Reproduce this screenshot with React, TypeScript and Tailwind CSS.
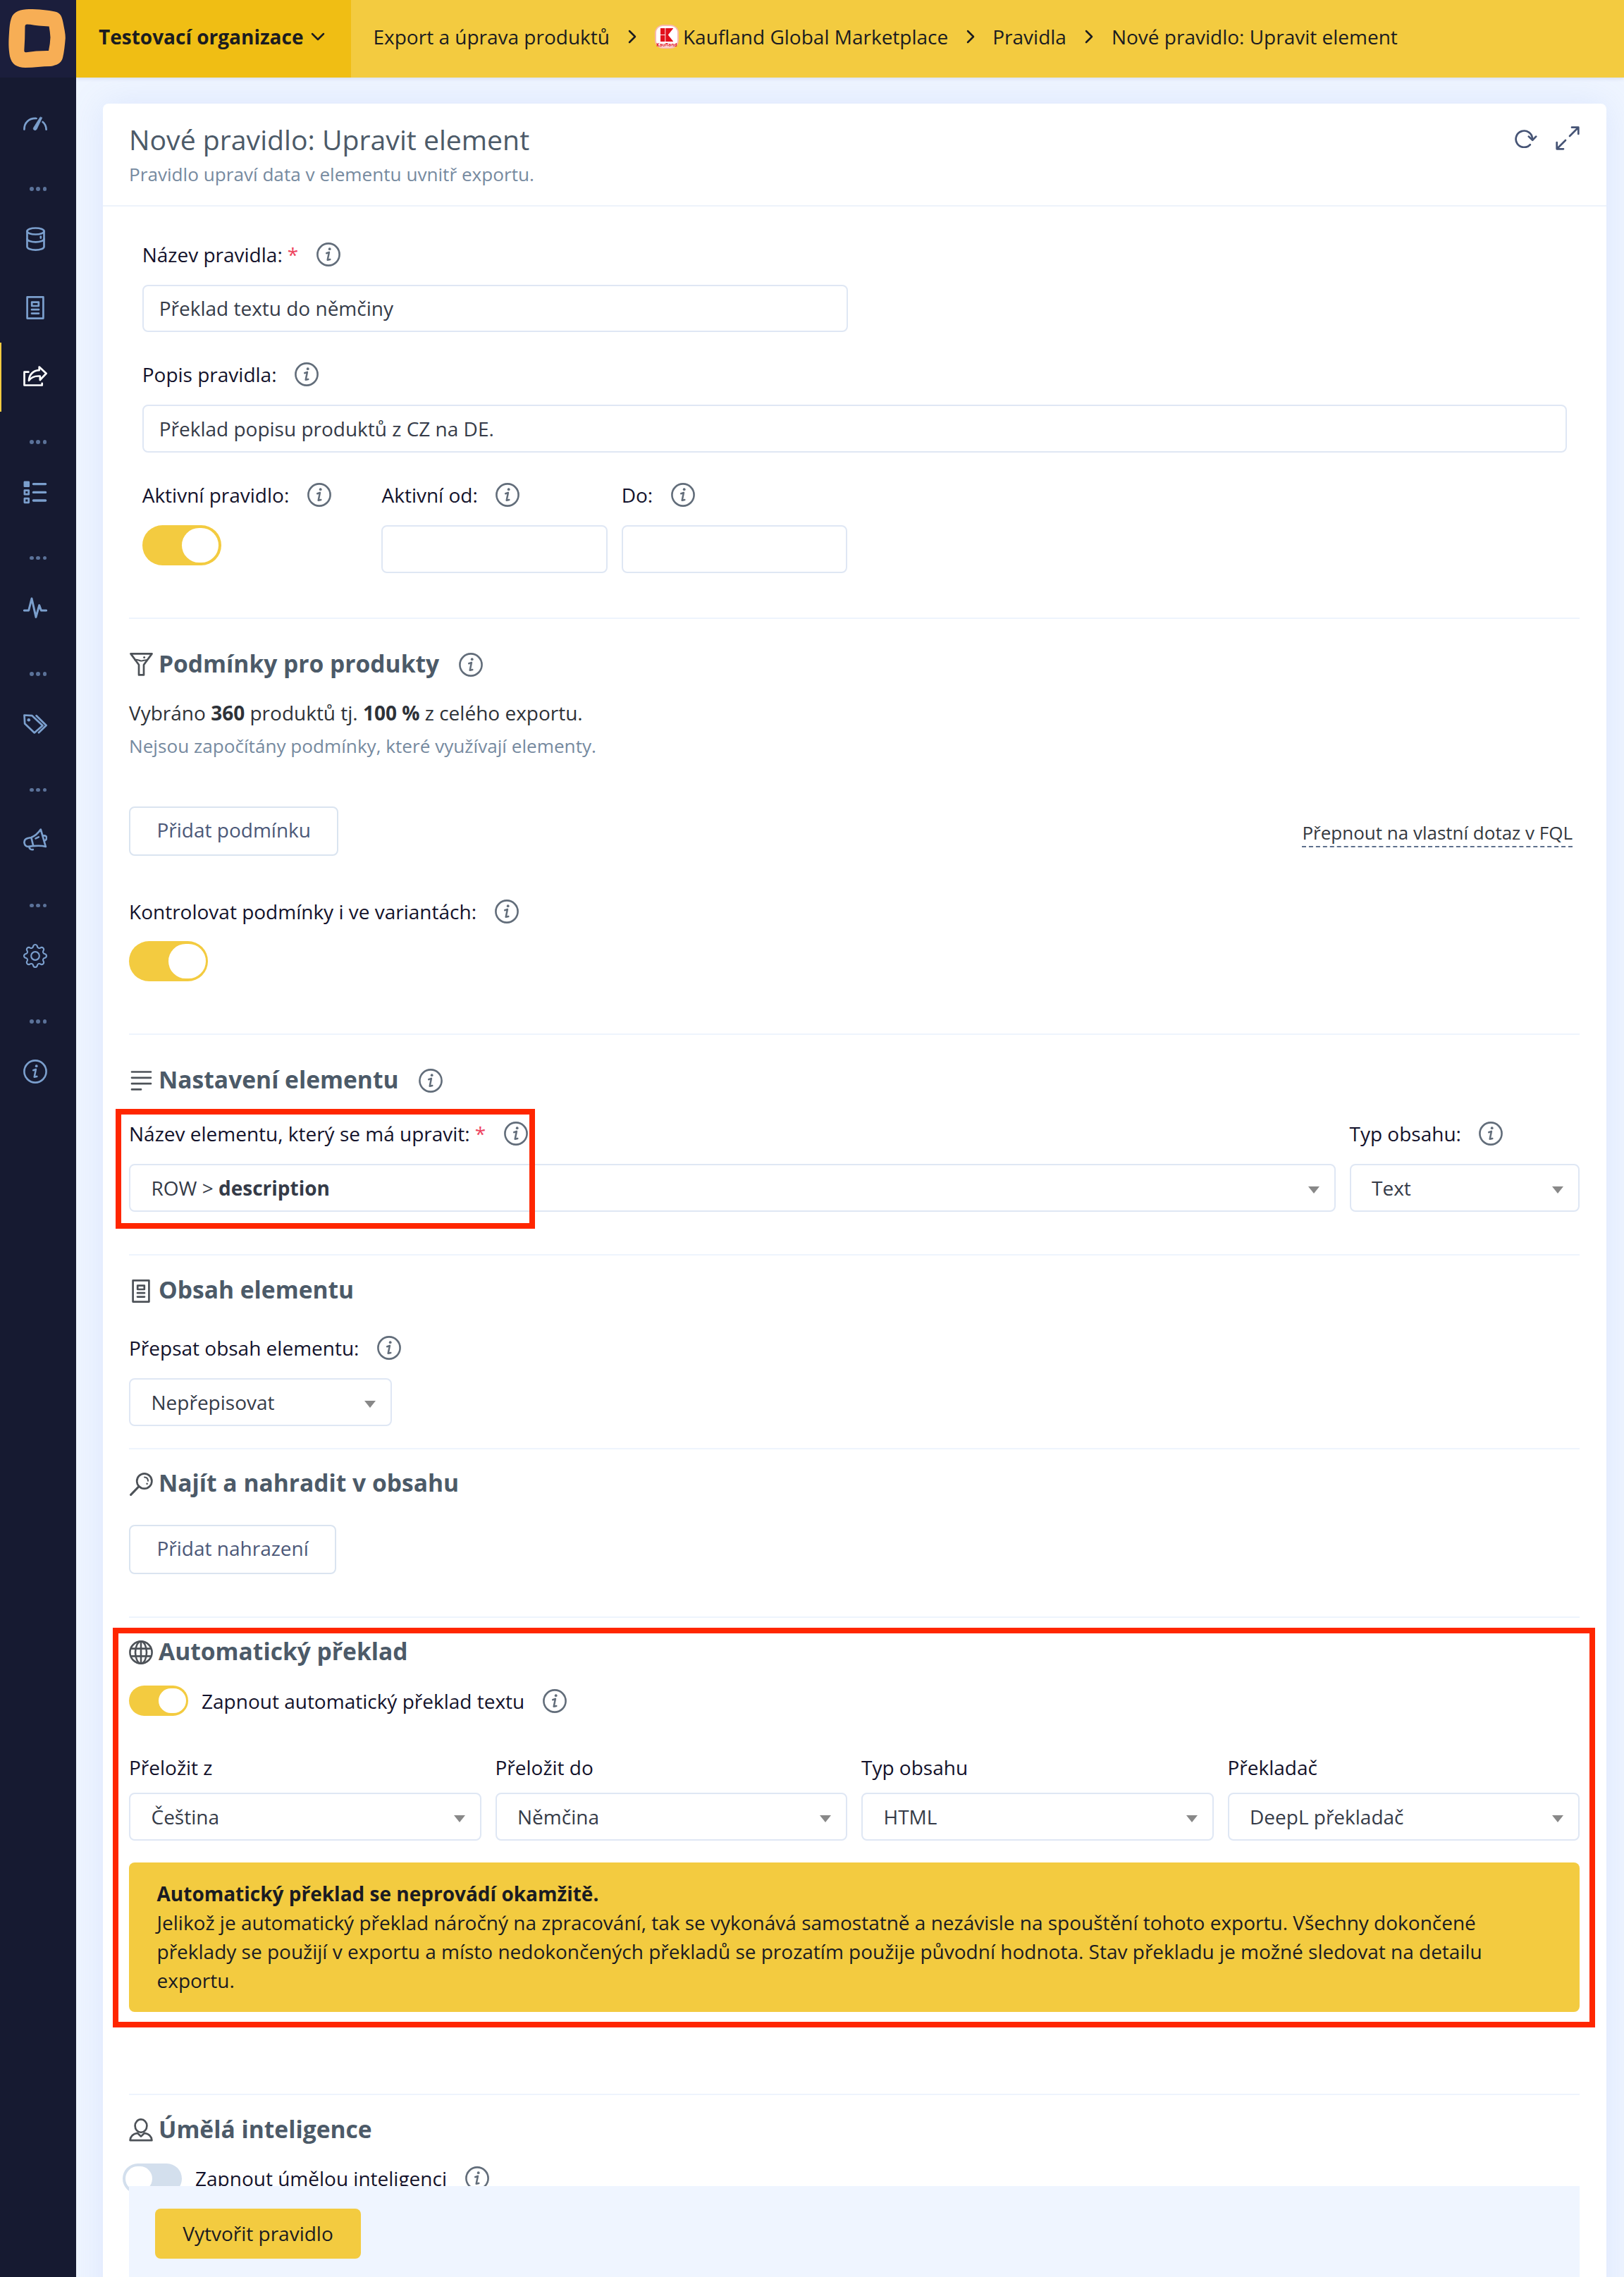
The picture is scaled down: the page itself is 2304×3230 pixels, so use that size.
import type { ReactNode } from "react";
import clsx from "clsx";
import { BsGear } from "react-icons/bs";

const iconStroke = {
  fill: "none",
  stroke: "currentColor",
  strokeWidth: 2.7,
  strokeLinecap: "round",
  strokeLinejoin: "round",
} as const;

function InfoIcon({ className }: { className?: string }) {
  return (
    <svg
      viewBox="0 0 34 34"
      className={clsx("size-[34px] shrink-0", className)}
      {...iconStroke}
    >
      <circle cx="17" cy="17" r="15.6" strokeWidth="2.6" />
      <circle cx="18.7" cy="9.2" r="1.9" fill="currentColor" stroke="none" />
      <path d="M14.2 15.2l3.7-1.3-2.2 10.8 3.6-.7" strokeWidth="2.5" />
    </svg>
  );
}

function GaugeIcon() {
  return (
    <svg viewBox="0 0 34 20" className="h-5 w-[34px]" {...iconStroke}>
      <path d="M1.4 18.6C1.4 9 8 2.4 18.6 3" />
      <path d="M27.6 8c3.3 2.6 4.8 6 5 10.6" />
      <path
        d="M24 1.2L14.6 16.2c-1.6 3 2.8 5 4.5 2L26.6 2.2z"
        fill="currentColor"
        strokeWidth="0.8"
      />
    </svg>
  );
}

function DatabaseIcon() {
  return (
    <svg viewBox="0 0 27 34" className="h-[34px] w-[27px]" {...iconStroke}>
      <ellipse cx="13.5" cy="6" rx="12" ry="4.5" />
      <path d="M1.5 6v22c0 2.6 5.4 4.6 12 4.6s12-2 12-4.6V6" />
      <path d="M1.5 17c0 2.4 5.4 4.3 12 4.3s12-1.9 12-4.3" />
      <path d="M20.8 13.6v2" />
    </svg>
  );
}

function DocumentIcon({ className }: { className?: string }) {
  return (
    <svg
      viewBox="0 0 26 33"
      className={clsx("h-[33px] w-[26px]", className)}
      {...iconStroke}
    >
      <rect x="1.6" y="1.4" width="22.8" height="30.2" />
      <rect x="8.2" y="8.6" width="9.6" height="5.4" />
      <path d="M8 19.2h10M8 24.6h10" />
    </svg>
  );
}

function ShareIcon() {
  return (
    <svg viewBox="0 0 34 29" className="h-[29px] w-[34px]" {...iconStroke}>
      <path d="M7.4 8.7H1.5v18.8h25.2v-2.7" />
      <path d="M22.7 1.6L32.6 10.8l-8.8 9.2v-5.4C16 14 11 16.5 8 20.8 8.3 12.5 14 6.6 22.7 6.2z" />
    </svg>
  );
}

function ListIcon() {
  return (
    <svg viewBox="0 0 34 33" className="h-[33px] w-[34px]" {...iconStroke}>
      <rect x="1.9" y="1.9" width="5.8" height="5.8" fill="currentColor" />
      <rect x="1.9" y="13.6" width="5.8" height="5.6" />
      <rect x="1.9" y="25.2" width="5.8" height="5.6" />
      <path d="M14.4 4.6h17.2M14.4 16.4h17.2M14.4 28h17.2" strokeWidth="3.4" />
    </svg>
  );
}

function PulseIcon() {
  return (
    <svg viewBox="0 0 34 30" className="h-[30px] w-[34px]" {...iconStroke}>
      <path d="M1.4 19h6.3L12 2l6 26.4L22.7 11.6l2.7 7.4h7.2" strokeWidth="3" />
    </svg>
  );
}

function TagsIcon() {
  return (
    <svg viewBox="0 0 34 28" className="h-7 w-[34px]" {...iconStroke}>
      <path d="M1.5 1.5l11 .7 15 14L15.8 26.4 2.2 13.6z" />
      <path d="M18.6 2.2L32.6 16 22 26.2" />
      <circle cx="7.8" cy="8.2" r="2.3" fill="currentColor" stroke="none" />
    </svg>
  );
}

function MegaphoneIcon() {
  return (
    <svg viewBox="0 0 34 32" className="h-8 w-[34px]" {...iconStroke}>
      <path d="M24.8 1.6l7 24.4c-6-1.8-13-1.4-18.8-.8l-5 .7C4.7 26.2 1.9 24 1.5 20.6 1.2 17.3 3.2 14.8 6.4 14l4.8-1C16 11.2 21 7.2 24.8 1.6z" />
      <path d="M11.4 13.2l2.8 11.6" />
      <path d="M8.4 26.4c.3 2.800 2.600 4.200 5.400 3.800" />
      <path d="M17.6 14.4l4.200-2" />
      <path d="M28.6 10.400c3-.6 4.900 1.200 4.400 4-.2 1.200-1.100 2.200-2.200 2.800" />
    </svg>
  );
}

function FunnelIcon() {
  return (
    <svg viewBox="0 0 33 33" className="size-[33px]" {...iconStroke}>
      <path d="M1.5 1.4h30L20 17v14.4h-7V17z" />
      <path
        d="M7.4 10.2c3-1.4 5.4 1 8.8 1.2 3 .2 5-1.4 8.2-1.2"
        strokeWidth="2"
      />
      <circle cx="20.6" cy="6.4" r="1.5" fill="currentColor" stroke="none" />
    </svg>
  );
}

function LinesIcon() {
  return (
    <svg viewBox="0 0 32 28" className="h-7 w-8" {...iconStroke}>
      <path d="M3 1.5h27M3 9.8h27M3 18.2h27M3 26.4h13" />
    </svg>
  );
}

function LensIcon() {
  return (
    <svg viewBox="0 0 33 33" className="size-[33px]" {...iconStroke}>
      <circle cx="20.8" cy="12" r="10.6" />
      <path d="M13 19.6L1.6 31.4" strokeWidth="3" />
      <path d="M21 6.4c3.2.2 5 2.4 5 5.4" strokeWidth="2" />
      <circle cx="24.6" cy="15.8" r="1.3" fill="currentColor" stroke="none" />
    </svg>
  );
}

function GlobeIcon() {
  return (
    <svg viewBox="0 0 34 34" className="size-[34px]" {...iconStroke} strokeWidth="2.6">
      <circle cx="17" cy="17" r="15.6" />
      <ellipse cx="17" cy="17" rx="8" ry="15.6" />
      <path d="M17 1.4v31.2M3 11.6h28M3 22.4h28" />
    </svg>
  );
}

function PersonIcon() {
  return (
    <svg viewBox="0 0 34 33" className="h-[33px] w-[34px]" {...iconStroke}>
      <ellipse cx="17" cy="10.6" rx="8.4" ry="9.2" />
      <path d="M12 20.8C6 21.8 2 24.4 1.6 31.2h30.800C32 24.400 28 21.800 22 20.800L17 25.600z" />
    </svg>
  );
}

function RefreshIcon() {
  return (
    <svg viewBox="0 0 32 28" className="h-7 w-8" {...iconStroke}>
      <path d="M21.8 23.3A11.7 11.7 0 1 1 25 14.6" />
      <path d="M19.8 11.6l5.4 5.2 5-5.2" />
    </svg>
  );
}

function ExpandIcon() {
  return (
    <svg viewBox="0 0 34 34" className="size-[34px]" {...iconStroke}>
      <path d="M20 14L32 2M23 1.7h9.300V11M14 20L2 32M1.700 23v9.300H11" />
    </svg>
  );
}

function BrandLogo() {
  return (
    <svg viewBox="0 0 108 110" className="h-[110px] w-[108px]">
      <path
        fill="#f7ae55"
        fillRule="evenodd"
        d="M41 13C55 13 68 14.5 78 16.5 86 18 88 24 89.5 32 91 40 93 48 92.8 54 92 64 91 74 89 82 87 90 80 92.5 72 94 60 94 48 96 36 96 24 96 16.5 91 14 80 12 68 12 60 13 46 13.5 38 14 32 16 26 19 16 30 13 41 13ZM38 34.5Q35.6 34.6 35.5 37 35.5 55 34.3 72 34.5 74.6 37 74.2 52 71.8 69 72 71.2 62 71.5 53 71 45 69.6 37.5 54 37 43 34.8Z"
      />
    </svg>
  );
}

function KauflandLogo() {
  return (
    <svg viewBox="0 0 34 34" className="size-[34px] shrink-0">
      <rect width="34" height="34" rx="12" fill="#f9b9ae" />
      <rect x="2" y="2" width="30" height="30" rx="9" fill="#fff" />
      <rect x="8" y="5" width="18" height="19" fill="#e2101c" />
      <path d="M14.8 5v19M8 14.5h7" stroke="#fff" strokeWidth="0.9" />
      <path d="M26 5.5v18L18.8 14.5z" fill="#fff" />
      <text
        x="17"
        y="31"
        textAnchor="middle"
        fontSize="6.5"
        fontWeight="700"
        fontFamily="Open Sans, sans-serif"
        fill="#e2101c"
      >
        Kaufland
      </text>
    </svg>
  );
}

function Chevron({ down }: { down?: boolean }) {
  return (
    <svg
      viewBox="0 0 20 20"
      className={clsx("size-5 shrink-0", down && "rotate-90")}
      {...iconStroke}
    >
      <path d="M6 2l8 8-8 8" strokeWidth="2.5" />
    </svg>
  );
}

type NavEntry = { id: string; icon: ReactNode; active?: boolean };

// null is a group separator
const NAV: (NavEntry | null)[] = [
  { id: "dashboard", icon: <GaugeIcon /> },
  null,
  { id: "sources", icon: <DatabaseIcon /> },
  { id: "catalog", icon: <DocumentIcon /> },
  { id: "exports", icon: <ShareIcon />, active: true },
  null,
  { id: "lists", icon: <ListIcon /> },
  null,
  { id: "monitoring", icon: <PulseIcon /> },
  null,
  { id: "pricing", icon: <TagsIcon /> },
  null,
  { id: "campaigns", icon: <MegaphoneIcon /> },
  null,
  { id: "settings", icon: <BsGear className="size-[34px]" /> },
  null,
  { id: "help", icon: <InfoIcon /> },
];

function Sidebar() {
  return (
    <aside className="relative z-10 w-[108px] shrink-0 bg-[#161a31]">
      <div className="h-[110px] bg-[#1b1e3c]">
        <BrandLogo />
      </div>
      <nav className="pt-[17px] text-[#7b9fcd]">
        {NAV.map((entry, i) =>
          entry ? (
            <a
              key={entry.id}
              className={clsx(
                "flex h-[97.4px] w-full items-center border-l-2 pb-[2.4px] pr-[9.5px]",
                entry.active
                  ? "border-[#f3cb40] text-white"
                  : "border-transparent",
              )}
            >
              <span className="flex w-full justify-center">{entry.icon}</span>
            </a>
          ) : (
            <div
              key={`sep-${i}`}
              className="flex h-[67px] justify-start gap-[3.800px] pl-[42.300px] pt-[40.800px]"
            >
              <span className="size-[5.400px] rounded-full bg-[#5b7299]" />
              <span className="size-[5.400px] rounded-full bg-[#5b7299]" />
              <span className="size-[5.400px] rounded-full bg-[#5b7299]" />
            </div>
          ),
        )}
      </nav>
    </aside>
  );
}

function TopBar() {
  return (
    <header className="relative flex h-[110px] shrink-0 bg-[#f3cb40] leading-[42px] text-[#1b1c20] shadow-[0_2px_5px_rgba(90,110,170,0.15)]">
      <button
        type="button"
        className="flex w-[389.5px] items-center gap-[11px] bg-[#f0be14] pb-[7px] pl-8 font-bold"
      >
        Testovací organizace
        <Chevron down />
      </button>
      <nav className="flex items-center pb-[7px] pl-8">
        <span>Export a úprava produktů</span>
        <span className="mx-[22px]">
          <Chevron />
        </span>
        <KauflandLogo />
        <span className="ml-1.5">Kaufland Global Marketplace</span>
        <span className="mx-[21.5px]">
          <Chevron />
        </span>
        <span>Pravidla</span>
        <span className="mx-[22px]">
          <Chevron />
        </span>
        <span>Nové pravidlo: Upravit element</span>
      </nav>
    </header>
  );
}

function Divider() {
  return <div className="h-[2px] bg-[#eef4fd]" />;
}

function Heading({
  icon,
  info,
  children,
}: {
  icon: ReactNode;
  info?: boolean;
  children: ReactNode;
}) {
  return (
    <h2 className="flex h-[34px] items-center text-[33.6px] font-bold leading-[34px] text-[#4c5a68]">
      <span className="mr-2 flex w-[34px] justify-center text-[#4d5258]">
        {icon}
      </span>
      <span className="pb-1">{children}</span>
      {info ? <InfoIcon className="ml-7 text-[#626d7a]" /> : null}
    </h2>
  );
}

function Label({
  required,
  info = true,
  children,
}: {
  required?: boolean;
  info?: boolean;
  children: ReactNode;
}) {
  return (
    <div className="flex h-[34px] items-center whitespace-nowrap leading-[34px] text-[#13122b]">
      {children}
      {required ? <span className="ml-[7px] text-[#ee4560]">*</span> : null}
      {info ? <InfoIcon className="ml-[25.5px] text-[#626d7a]" /> : null}
    </div>
  );
}

function TextInput({ value, className }: { value?: string; className?: string }) {
  return (
    <input
      type="text"
      defaultValue={value}
      className={clsx(
        "mt-[26px] block h-[67.6px] rounded-lg border-2 border-[#dfe7f4] bg-white px-[22px] text-[#353b48] outline-none",
        className,
      )}
    />
  );
}

function Select({ children, className }: { children: ReactNode; className?: string }) {
  return (
    <div
      className={clsx(
        "flex h-[68px] items-center justify-between rounded-lg border-2 border-[#dfe7f4] pl-[29.5px] pr-[21px] text-[#353b48]",
        className,
      )}
    >
      <span>{children}</span>
      <span className="mt-1.5 border-x-8 border-t-[10px] border-x-transparent border-t-[#888888]" />
    </div>
  );
}

function Toggle({ on, small }: { on?: boolean; small?: boolean }) {
  return (
    <button
      type="button"
      role="switch"
      aria-checked={!!on}
      className={clsx(
        "flex shrink-0 items-center rounded-full px-[3.5px]",
        small ? "h-[42.5px] w-[84px]" : "h-[56.5px] w-[112px]",
        on ? "justify-end bg-[#f3cb40]" : "justify-start bg-[#d3dfed]",
      )}
    >
      <span
        className={clsx(
          "rounded-full bg-white",
          small ? "h-[35px] w-[38.5px]" : "h-[48.5px] w-[52.5px]",
        )}
      />
    </button>
  );
}

function OutlineButton({ children }: { children: ReactNode }) {
  return (
    <button
      type="button"
      className="h-[70px] rounded-lg border-2 border-[#dae4f0] px-[37.5px] pb-1 text-[#4b5878]"
    >
      {children}
    </button>
  );
}

const TRANSLATION_FIELDS = [
  { label: "Přeložit z", value: "Čeština" },
  { label: "Přeložit do", value: "Němčina" },
  { label: "Typ obsahu", value: "HTML" },
  { label: "Překladač", value: "DeepL překladač" },
];

function RuleForm() {
  return (
    <div className="pl-[37px] pr-[38px]">
      <div className="pb-[62.7px] pl-[18.7px] pr-[18px] pt-[50.5px]">
        <Label required>Název pravidla:</Label>
        <TextInput value="Překlad textu do němčiny" className="w-[1001px]" />
        <div className="mt-[43.3px]">
          <Label>Popis pravidla:</Label>
          <TextInput value="Překlad popisu produktů z CZ na DE." className="w-full" />
        </div>
        <div className="mt-[43.3px] flex">
          <div className="w-[339.8px]">
            <Label>Aktivní pravidlo:</Label>
            <div className="mt-[26px]">
              <Toggle on />
            </div>
          </div>
          <div className="mr-[19.5px]">
            <Label>Aktivní od:</Label>
            <TextInput className="w-[320.700px]" />
          </div>
          <div>
            <Label>Do:</Label>
            <TextInput className="w-[320.700px]" />
          </div>
        </div>
      </div>

      <Divider />
      <section className="pb-[74.5px] pt-12">
        <Heading icon={<FunnelIcon />} info>
          Podmínky pro produkty
        </Heading>
        <p className="mt-[30px] leading-[42px] text-[#2e3238]">
          Vybráno <b>360</b> produktů tj. <b>100 %</b> z celého exportu.
        </p>
        <p className="mt-1.5 text-[26.15px] leading-10 text-[#768a9f]">
          Nejsou započítány podmínky, které využívají elementy.
        </p>
        <div className="mt-[66px] flex items-center justify-between pr-2.5">
          <OutlineButton>Přidat podmínku</OutlineButton>
          <a className="mt-[7px] border-b-2 border-dashed border-[#5d6f8c] text-[26px] leading-[38px] text-[#343840]">
            Přepnout na vlastní dotaz v FQL
          </a>
        </div>
        <div className="mt-[62px]">
          <Label>Kontrolovat podmínky i ve variantách:</Label>
          <div className="mt-[25.5px]">
            <Toggle on />
          </div>
        </div>
      </section>

      <Divider />
      <section className="pb-[60px] pt-12">
        <Heading icon={<LinesIcon />} info>
          Nastavení elementu
        </Heading>
        <div className="mt-[41px] flex gap-5">
          <div className="flex-1">
            <Label required>Název elementu, který se má upravit:</Label>
            <Select className="mt-[26px]">
              ROW &gt; <b>description</b>
            </Select>
          </div>
          <div className="w-[326.500px]">
            <Label>Typ obsahu:</Label>
            <Select className="mt-[26px]">Text</Select>
          </div>
        </div>
      </section>

      <Divider />
      <section className="pb-[30.5px] pt-[33px]">
        <Heading icon={<DocumentIcon />}>Obsah elementu</Heading>
        <div className="mt-[47px]">
          <Label>Přepsat obsah elementu:</Label>
          <Select className="mt-[26px] w-[373px]">Nepřepisovat</Select>
        </div>
      </section>

      <Divider />
      <section className="pb-[60px] pt-[32.5px]">
        <Heading icon={<LensIcon />}>Najít a nahradit v obsahu</Heading>
        <div className="mt-[40.5px] flex">
          <OutlineButton>Přidat nahrazení</OutlineButton>
        </div>
      </section>

      <Divider />
      <section className="pb-[115.7px] pt-[32.4px]">
        <Heading icon={<GlobeIcon />}>Automatický překlad</Heading>
        <div className="mt-[30.4px] flex items-center gap-[19px]">
          <Toggle on small />
          <Label>Zapnout automatický překlad textu</Label>
        </div>
        <div className="mt-[56.6px] grid grid-cols-4 gap-5">
          {TRANSLATION_FIELDS.map((field) => (
            <div key={field.label}>
              <Label info={false}>{field.label}</Label>
              <Select className="mt-[18.7px]">{field.value}</Select>
            </div>
          ))}
        </div>
        <div className="mt-[30.7px] h-[212.5px] rounded-lg bg-[#f3cb40] px-[39.5px] pt-[23.7px] leading-[41.25px] text-[#1a1b22]">
          <b className="block">Automatický překlad se neprovádí okamžitě.</b>
          <p>
            Jelikož je automatický překlad náročný na zpracování, tak se
            vykonává samostatně a nezávisle na spouštění tohoto exportu. Všechny
            dokončené překlady se použijí v exportu a místo nedokončených
            překladů se prozatím použije původní hodnota. Stav překladu je možné
            sledovat na detailu exportu.
          </p>
        </div>
      </section>

      <Divider />
      <section className="pt-[32.8px]">
        <Heading icon={<PersonIcon />}>Úmělá inteligence</Heading>
        <div className="-ml-[9px] mt-[30.3px] flex items-center gap-[19px]">
          <Toggle small />
          <Label>Zapnout úmělou inteligenci</Label>
        </div>
      </section>
    </div>
  );
}

export default function App() {
  return (
    <div className="relative flex h-[3230px] w-[2304px] overflow-hidden bg-[#eff5ff] font-['Open_Sans',sans-serif] text-[28px]">
      <Sidebar />
      <div className="flex min-w-0 flex-1 flex-col">
        <TopBar />
        <main className="flex-1 pl-[38px] pr-[25px] pt-[37px]">
          <div className="h-[3200px] rounded-lg bg-white shadow-[0_0_50px_rgba(110,150,240,0.15)]">
            <div className="flex h-[146px] justify-between border-b-2 border-[#edf3fb] pl-[37px] pr-[38px] pt-[25px]">
              <div>
                <h1 className="text-[39.2px] leading-[52px] text-[#4c5a68]">
                  Nové pravidlo: Upravit element
                </h1>
                <p className="mt-1 text-[26.15px] leading-[38px] text-[#768a9f]">
                  Pravidlo upraví data v elementu uvnitř exportu.
                </p>
              </div>
              <div className="mt-[7px] flex h-[34px] items-center gap-[26px] text-[#465475]">
                <RefreshIcon />
                <ExpandIcon />
              </div>
            </div>
            <RuleForm />
          </div>
        </main>
      </div>

      {/* action bar stays over the end of the form */}
      <footer className="absolute bottom-0 left-[183px] h-[129px] w-[2058px] bg-[#eff5ff] pl-[37px] pt-8">
        <button
          type="button"
          className="h-[70.5px] w-[292px] rounded-lg bg-[#f3cb40] text-[#1b1c20]"
        >
          Vytvořit pravidlo
        </button>
      </footer>

      {/* highlight frames */}
      <div className="absolute left-[164px] top-[1573px] h-[169.5px] w-[595px] border-[8.5px] border-[#ff2600]" />
      <div className="absolute left-[160px] top-[2309px] h-[567px] w-[2103px] border-[8.5px] border-[#ff2600]" />
    </div>
  );
}
